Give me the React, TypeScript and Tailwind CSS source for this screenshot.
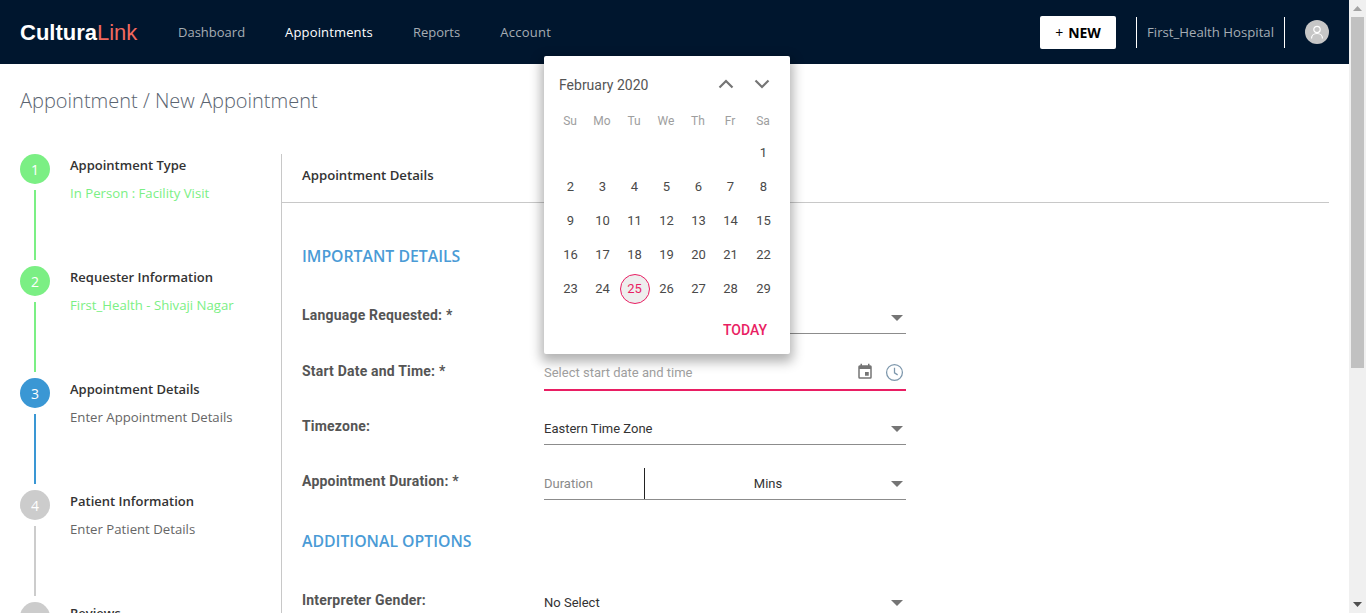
import React from "react";

const open = "font-['Open_Sans',sans-serif]";
const roboto = "font-['Roboto',sans-serif]";

function Caret() {
  return (
    <svg width="12" height="6" viewBox="0 0 12 6" className="shrink-0">
      <path d="M0 0h12L6 6z" fill="#757575" />
    </svg>
  );
}

const steps = [
  { n: 1, title: "Appointment Type", sub: "In Person : Facility Visit", color: "bg-[#7bef84]", subc: "text-[#7bef84]" },
  { n: 2, title: "Requester Information", sub: "First_Health - Shivaji Nagar", color: "bg-[#7bef84]", subc: "text-[#7bef84]" },
  { n: 3, title: "Appointment Details", sub: "Enter Appointment Details", color: "bg-[#3a97d4]", subc: "text-[#666666]" },
  { n: 4, title: "Patient Information", sub: "Enter Patient Details", color: "bg-[#cccccc]", subc: "text-[#666666]" },
];

function Step({ n, title, sub, color, subc }: (typeof steps)[number]) {
  return (
    <div className="flex h-[112px]">
      <div className="flex w-[30px] flex-col items-center">
        <div className={`flex h-[30px] w-[30px] items-center justify-center rounded-full text-[14px] text-white ${color}`}>{n}</div>
        <div className={`mt-[6px] h-[70px] w-[2px] ${color}`} />
      </div>
      <div className="ml-[20px]">
        <div className="text-[13px] font-semibold leading-[22px] text-[#333333]">{title}</div>
        <div className={`mt-[6px] text-[13.2px] leading-[22px] ${subc}`}>{sub}</div>
      </div>
    </div>
  );
}

function Label({ children, className }: { children: React.ReactNode; className: string }) {
  return <div className={`w-[242px] shrink-0 text-[14px] font-bold tracking-[0.2px] text-[#555555] ${roboto} ${className}`}>{children}</div>;
}

function Select({ value }: { value: string }) {
  return (
    <div className={`flex h-[32px] w-[362px] items-center justify-between border-b border-[#8c8c8c] pr-[3px] text-[13px] text-[#333333] ${roboto}`}>
      <span>{value}</span>
      <Caret />
    </div>
  );
}

const weeks: (number | null)[][] = [
  [null, null, null, null, null, null, 1],
  [2, 3, 4, 5, 6, 7, 8],
  [9, 10, 11, 12, 13, 14, 15],
  [16, 17, 18, 19, 20, 21, 22],
  [23, 24, 25, 26, 27, 28, 29],
];

function Calendar() {
  return (
    <div className={`absolute left-[544px] top-[56px] z-10 h-[298px] w-[246px] rounded-[2px] bg-white pl-[10px] shadow-[0_5px_12px_3px_rgba(0,0,0,0.3)] ${roboto}`}>
      <div className="flex h-[58px] items-center pl-[5px] pr-[20px]">
        <span className="text-[14px] text-[#555555]">February 2020</span>
        <svg width="16" height="10" viewBox="0 0 16 10" className="ml-auto mb-[2px]" fill="none" stroke="#757575" strokeWidth="2.2">
          <path d="M1.5 8.5 8 2l6.5 6.5" />
        </svg>
        <svg width="16" height="10" viewBox="0 0 16 10" className="ml-[20px] mb-[2px]" fill="none" stroke="#757575" strokeWidth="2.2">
          <path d="M1.5 1.5 8 8l6.5-6.5" />
        </svg>
      </div>
      <div className="grid w-[226px] grid-cols-[repeat(6,32px)_34px] text-center text-[12px] leading-[14px] text-[#9e9e9e]">
        {["Su", "Mo", "Tu", "We", "Th", "Fr", "Sa"].map((d) => (
          <span key={d}>{d}</span>
        ))}
      </div>
      <div className="mt-[8px] grid w-[226px] grid-cols-[repeat(6,32px)_34px] auto-rows-[34px] text-[13px] text-[#4a4a4a]">
        {weeks.flat().map((d, i) => (
          <div key={i} className="flex items-center justify-center pl-[1px]">
            {d === 25 ? (
              <span className="flex h-[30px] w-[30px] shrink-0 items-center justify-center rounded-full border border-[#e91e63] bg-[#eeeeee] text-[#e91e63]">25</span>
            ) : (
              d
            )}
          </div>
        ))}
      </div>
      <div className="mt-[16px] pr-[23px] text-right text-[14px] font-medium leading-[16px] text-[#e91e63]">TODAY</div>
    </div>
  );
}

export default function App() {
  return (
    <div className={`relative flex h-[613px] w-full overflow-hidden bg-white ${open}`}>
      <div className="flex min-w-0 flex-1 flex-col">
        <header className="flex h-[64px] shrink-0 items-center bg-[#00162e] pl-[20px] pr-[20px]">
          <div className="w-[158px] font-['Liberation_Sans',sans-serif] text-[22px] font-bold tracking-[0px] text-white">
            Cultura<span className="font-normal text-[#f0695f]">Link</span>
          </div>
          <nav className="flex gap-[40px] pt-[1px] text-[13px]">
            <span className="text-[#a6adb4]">Dashboard</span>
            <span className="font-medium tracking-[0.15px] text-white">Appointments</span>
            <span className="text-[#a6adb4]">Reports</span>
            <span className="tracking-[0.3px] text-[#a6adb4]">Account</span>
          </nav>
          <div className="ml-auto flex h-[33px] w-[76px] items-center justify-center rounded-[2px] bg-white text-[14px] font-bold text-black">
            <span className="mr-[5px] font-normal">+</span>NEW
          </div>
          <div className="ml-[20px] h-[31px] w-px bg-white" />
          <span className="ml-[10px] pt-[1px] text-[13.2px] text-[#a6adb4]">First_Health Hospital</span>
          <div className="ml-[10px] h-[31px] w-px bg-white" />
          <div className="ml-[20px] flex h-[24px] w-[24px] items-center justify-center rounded-full bg-[#c6c6c6]">
            <svg width="14" height="14" viewBox="0 0 14 14" fill="none" stroke="#ffffff" strokeWidth="1.2">
              <circle cx="7" cy="4.5" r="3.2" />
              <path d="M1.5 13.5c0-3 2.5-5 5.5-5s5.5 2 5.5 5" />
            </svg>
          </div>
        </header>

        <main className="min-h-0 flex-1 pl-[20px] pr-[20px]">
          <h1 className="mt-[23px] text-[20px] font-light leading-[28px] text-[#5a6470]">Appointment / New Appointment</h1>
          <div className="mt-[39px] flex">
            <aside className="w-[261px] shrink-0">
              {steps.map((s) => (
                <Step key={s.n} {...s} />
              ))}
              <div className="flex">
                <div className="h-[30px] w-[30px] rounded-full bg-[#cccccc]" />
                <div className="ml-[20px] text-[13px] font-semibold leading-[22px] text-[#333333]">Reviews</div>
              </div>
            </aside>
            <section className="min-w-0 flex-1 border-l border-[#c8c8c8]">
              <div className="flex h-[49px] items-center border-b border-[#c8c8c8] pb-[5px] pl-[20px] text-[13.2px] font-semibold text-[#333333]">
                Appointment Details
              </div>
              <div className="pl-[20px]">
                <h2 className="mt-[41px] text-[15.8px] font-semibold leading-[24px] text-[#4a9bd6]">IMPORTANT DETAILS</h2>
                <div className="mt-[34px] flex items-start">
                  <Label className="pt-[3px]">Language Requested: *</Label>
                  <Select value="" />
                </div>
                <div className="mt-[19px] flex items-start">
                  <Label className="pt-[8px]">Start Date and Time: *</Label>
                  <div className={`flex h-[38px] w-[362px] items-center border-b-2 border-[#e91e63] pr-[2px] pt-[2px] text-[13px] text-[#a0a0a0] ${roboto}`}>
                    <span className="mt-[2px]">Select start date and time</span>
                    <svg width="18" height="18" viewBox="0 0 24 24" className="ml-auto" fill="#757575">
                      <path d="M19 3h-1V1h-2v2H8V1H6v2H5a2 2 0 0 0-2 2v14a2 2 0 0 0 2 2h14a2 2 0 0 0 2-2V5a2 2 0 0 0-2-2zm0 16H5V8h14v11zM12 12h5v5h-5z" />
                    </svg>
                    <svg width="19" height="19" viewBox="0 0 24 24" className="ml-[11px]" fill="none" stroke="#7d97ac" strokeWidth="1.6">
                      <circle cx="12" cy="12" r="10" />
                      <path d="M12 6v6.5l4 2.5" />
                    </svg>
                  </div>
                </div>
                <div className="mt-[22px] flex items-start">
                  <Label className="pt-[3px]">Timezone:</Label>
                  <Select value="Eastern Time Zone" />
                </div>
                <div className="mt-[23px] flex items-start">
                  <Label className="pt-[3px]">Appointment Duration: *</Label>
                  <div className={`flex h-[32px] w-[362px] items-center border-b border-[#8c8c8c] pr-[3px] text-[13px] ${roboto}`}>
                    <span className="w-[100px] text-[#8a8a8a]">Duration</span>
                    <div className="h-full w-px bg-[#222222]" />
                    <span className="flex-1 text-center text-[#333333]">Mins</span>
                    <Caret />
                  </div>
                </div>
                <h2 className="mt-[29px] text-[15.8px] font-semibold leading-[24px] text-[#4a9bd6]">ADDITIONAL OPTIONS</h2>
                <div className="mt-[34px] flex items-start">
                  <Label className="pt-[3px]">Interpreter Gender:</Label>
                  <Select value="No Select" />
                </div>
              </div>
            </section>
          </div>
        </main>
      </div>

      <Calendar />

      <div className="relative flex w-[17px] shrink-0 flex-col items-center bg-[#f0f0f0]">
        <svg width="9" height="5" viewBox="0 0 9 5" className="mt-[6px]"><path d="M4.5 0 9 5H0z" fill="#a3a3a3" /></svg>
        <div className="mt-[6px] h-[351px] w-[13px] bg-[#c1c1c1]" />
        <svg width="9" height="5" viewBox="0 0 9 5" className="mb-[6px] mt-auto"><path d="M0 0h9L4.5 5z" fill="#505050" /></svg>
      </div>
    </div>
  );
}
